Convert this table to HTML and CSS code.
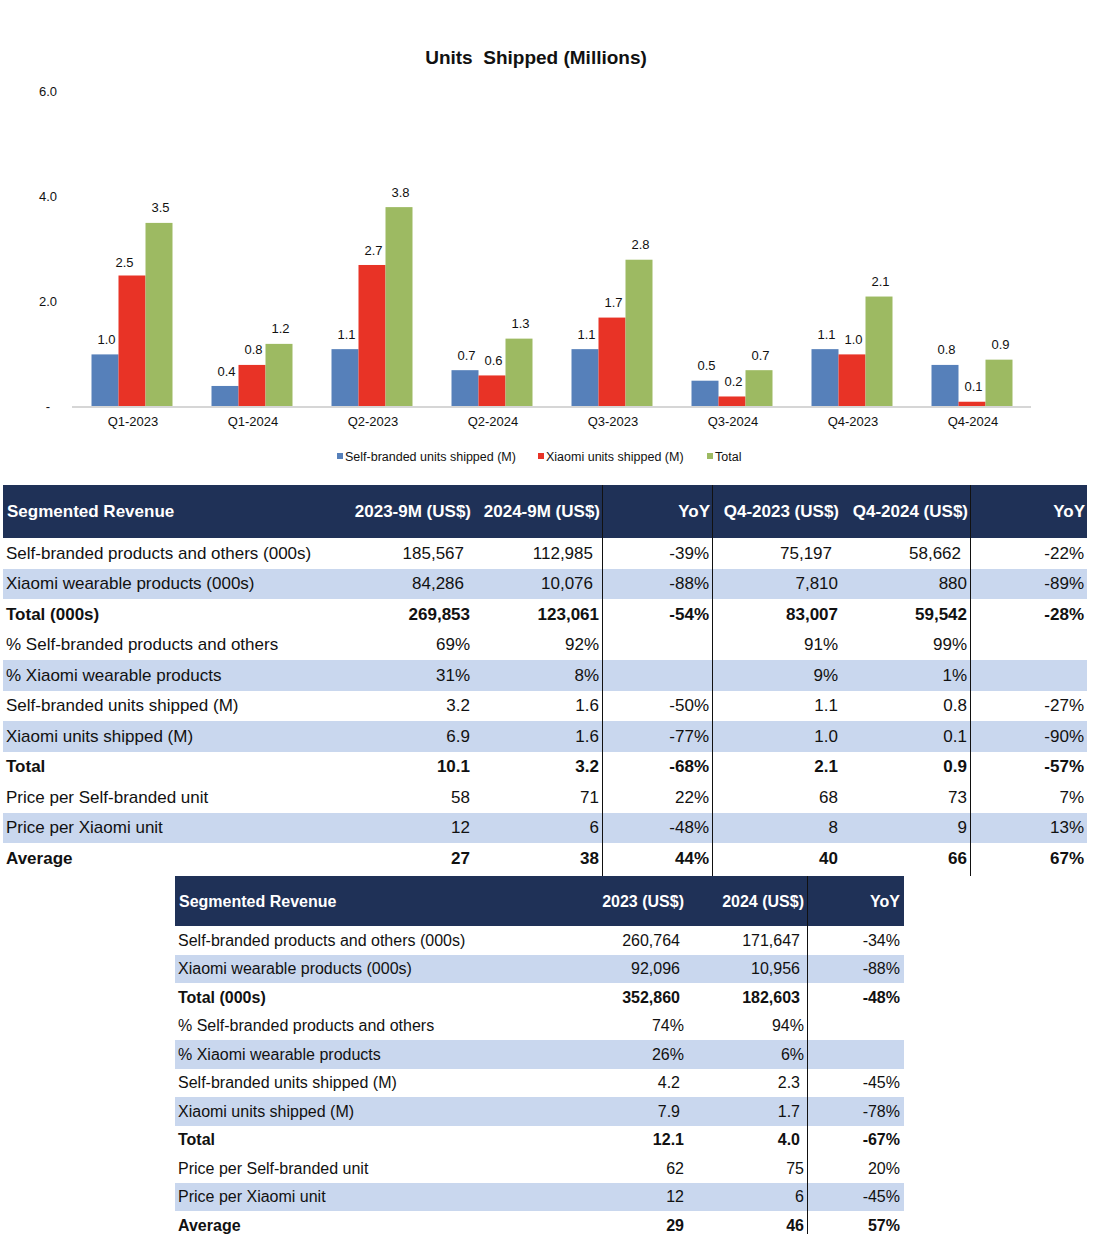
FILE: index.html
```html
<!DOCTYPE html>
<html>
<head>
<meta charset="utf-8">
<title>Units Shipped</title>
<link rel="stylesheet" href="styles.css">
</head>
<body>
<div class="chart">
<svg width="1110" height="485" viewBox="0 0 1110 485" xmlns="http://www.w3.org/2000/svg">
  <text class="title" x="536" y="63.5" text-anchor="middle">Units&#160; Shipped (Millions)</text>
  <g class="ylab" text-anchor="end">
    <text x="57" y="96">6.0</text>
    <text x="57" y="201.2">4.0</text>
    <text x="57" y="306.4">2.0</text>
    <text x="50" y="411">-</text>
  </g>
  <g class="bars">
    <rect class="b" x="91.5" y="354.4" width="27" height="52.6"/>
    <rect class="r" x="118.5" y="275.5" width="27" height="131.5"/>
    <rect class="g" x="145.5" y="222.9" width="27" height="184.1"/>

    <rect class="b" x="211.5" y="385.96" width="27" height="21.04"/>
    <rect class="r" x="238.5" y="364.92" width="27" height="42.08"/>
    <rect class="g" x="265.5" y="343.88" width="27" height="63.12"/>

    <rect class="b" x="331.5" y="349.14" width="27" height="57.86"/>
    <rect class="r" x="358.5" y="264.98" width="27" height="142.02"/>
    <rect class="g" x="385.5" y="207.12" width="27" height="199.88"/>

    <rect class="b" x="451.5" y="370.18" width="27" height="36.82"/>
    <rect class="r" x="478.5" y="375.44" width="27" height="31.56"/>
    <rect class="g" x="505.5" y="338.62" width="27" height="68.38"/>

    <rect class="b" x="571.5" y="349.14" width="27" height="57.86"/>
    <rect class="r" x="598.5" y="317.58" width="27" height="89.42"/>
    <rect class="g" x="625.5" y="259.72" width="27" height="147.28"/>

    <rect class="b" x="691.5" y="380.7" width="27" height="26.3"/>
    <rect class="r" x="718.5" y="396.48" width="27" height="10.52"/>
    <rect class="g" x="745.5" y="370.18" width="27" height="36.82"/>

    <rect class="b" x="811.5" y="349.14" width="27" height="57.86"/>
    <rect class="r" x="838.5" y="354.4" width="27" height="52.6"/>
    <rect class="g" x="865.5" y="296.54" width="27" height="110.46"/>

    <rect class="b" x="931.5" y="364.92" width="27" height="42.08"/>
    <rect class="r" x="958.5" y="401.74" width="27" height="5.26"/>
    <rect class="g" x="985.5" y="359.66" width="27" height="47.34"/>
  </g>
  <line class="axis" x1="72" y1="407" x2="1031" y2="407"/>
  <g class="vlab" text-anchor="middle">
    <text x="106.5" y="343.9">1.0</text>
    <text x="124.5" y="267">2.5</text>
    <text x="160.5" y="212.4">3.5</text>

    <text x="226.5" y="375.5">0.4</text>
    <text x="253.5" y="354.4">0.8</text>
    <text x="280.5" y="333.4">1.2</text>

    <text x="346.5" y="338.6">1.1</text>
    <text x="373.5" y="254.5">2.7</text>
    <text x="400.5" y="196.6">3.8</text>

    <text x="466.5" y="359.7">0.7</text>
    <text x="493.5" y="364.9">0.6</text>
    <text x="520.5" y="328.1">1.3</text>

    <text x="586.5" y="338.6">1.1</text>
    <text x="613.5" y="307.1">1.7</text>
    <text x="640.5" y="249.2">2.8</text>

    <text x="706.5" y="370.2">0.5</text>
    <text x="733.5" y="386">0.2</text>
    <text x="760.5" y="359.7">0.7</text>

    <text x="826.5" y="338.6">1.1</text>
    <text x="853.5" y="343.9">1.0</text>
    <text x="880.5" y="286">2.1</text>

    <text x="946.5" y="354.4">0.8</text>
    <text x="973.5" y="391.2">0.1</text>
    <text x="1000.5" y="349.2">0.9</text>
  </g>
  <g class="xlab" text-anchor="middle">
    <text x="133" y="426">Q1-2023</text>
    <text x="253" y="426">Q1-2024</text>
    <text x="373" y="426">Q2-2023</text>
    <text x="493" y="426">Q2-2024</text>
    <text x="613" y="426">Q3-2023</text>
    <text x="733" y="426">Q3-2024</text>
    <text x="853" y="426">Q4-2023</text>
    <text x="973" y="426">Q4-2024</text>
  </g>
  <g class="legend">
    <rect class="b" x="337" y="453" width="6" height="6"/>
    <text x="345" y="460.5">Self-branded units shipped (M)</text>
    <rect class="r" x="538" y="453" width="6" height="6"/>
    <text x="546" y="460.5">Xiaomi units shipped (M)</text>
    <rect class="g" x="707" y="453" width="6" height="6"/>
    <text x="715" y="460.5">Total</text>
  </g>
</svg>
</div>

<div class="t1">
  <div class="row head">
    <div class="lab">Segmented Revenue</div>
    <div>2023-9M (US$)</div>
    <div>2024-9M (US$)</div>
    <div class="bl">YoY</div>
    <div class="bl">Q4-2023 (US$)</div>
    <div>Q4-2024 (US$)</div>
    <div class="bl">YoY</div>
  </div>
  <div class="row">
    <div class="lab">Self-branded products and others (000s)</div>
    <div class="c">185,567</div><div class="c">112,985</div><div class="bl">-39%</div>
    <div class="bl c">75,197</div><div class="c">58,662</div><div class="bl">-22%</div>
  </div>
  <div class="row alt">
    <div class="lab">Xiaomi wearable products (000s)</div>
    <div class="c">84,286</div><div class="c">10,076</div><div class="bl">-88%</div>
    <div class="bl">7,810</div><div>880</div><div class="bl">-89%</div>
  </div>
  <div class="row bold">
    <div class="lab">Total (000s)</div>
    <div>269,853</div><div>123,061</div><div class="bl">-54%</div>
    <div class="bl">83,007</div><div>59,542</div><div class="bl">-28%</div>
  </div>
  <div class="row">
    <div class="lab">% Self-branded products and others</div>
    <div>69%</div><div>92%</div><div class="bl"></div>
    <div class="bl">91%</div><div>99%</div><div class="bl"></div>
  </div>
  <div class="row alt">
    <div class="lab">% Xiaomi wearable products</div>
    <div>31%</div><div>8%</div><div class="bl"></div>
    <div class="bl">9%</div><div>1%</div><div class="bl"></div>
  </div>
  <div class="row">
    <div class="lab">Self-branded units shipped (M)</div>
    <div>3.2</div><div>1.6</div><div class="bl">-50%</div>
    <div class="bl">1.1</div><div>0.8</div><div class="bl">-27%</div>
  </div>
  <div class="row alt">
    <div class="lab">Xiaomi units shipped (M)</div>
    <div>6.9</div><div>1.6</div><div class="bl">-77%</div>
    <div class="bl">1.0</div><div>0.1</div><div class="bl">-90%</div>
  </div>
  <div class="row bold">
    <div class="lab">Total</div>
    <div>10.1</div><div>3.2</div><div class="bl">-68%</div>
    <div class="bl">2.1</div><div>0.9</div><div class="bl">-57%</div>
  </div>
  <div class="row">
    <div class="lab">Price per Self-branded unit</div>
    <div>58</div><div>71</div><div class="bl">22%</div>
    <div class="bl">68</div><div>73</div><div class="bl">7%</div>
  </div>
  <div class="row alt">
    <div class="lab">Price per Xiaomi unit</div>
    <div>12</div><div>6</div><div class="bl">-48%</div>
    <div class="bl">8</div><div>9</div><div class="bl">13%</div>
  </div>
  <div class="row bold last">
    <div class="lab">Average</div>
    <div>27</div><div>38</div><div class="bl">44%</div>
    <div class="bl">40</div><div>66</div><div class="bl">67%</div>
  </div>
</div>

<div class="t2">
  <div class="row head">
    <div class="lab">Segmented Revenue</div>
    <div>2023 (US$)</div>
    <div>2024 (US$)</div>
    <div class="bl">YoY</div>
  </div>
  <div class="row">
    <div class="lab">Self-branded products and others (000s)</div>
    <div class="c">260,764</div><div class="c">171,647</div><div class="bl">-34%</div>
  </div>
  <div class="row alt">
    <div class="lab">Xiaomi wearable products (000s)</div>
    <div class="c">92,096</div><div class="c">10,956</div><div class="bl">-88%</div>
  </div>
  <div class="row bold">
    <div class="lab">Total (000s)</div>
    <div class="c">352,860</div><div class="c">182,603</div><div class="bl">-48%</div>
  </div>
  <div class="row">
    <div class="lab">% Self-branded products and others</div>
    <div>74%</div><div>94%</div><div class="bl"></div>
  </div>
  <div class="row alt">
    <div class="lab">% Xiaomi wearable products</div>
    <div>26%</div><div>6%</div><div class="bl"></div>
  </div>
  <div class="row">
    <div class="lab">Self-branded units shipped (M)</div>
    <div class="c">4.2</div><div class="c">2.3</div><div class="bl">-45%</div>
  </div>
  <div class="row alt">
    <div class="lab">Xiaomi units shipped (M)</div>
    <div class="c">7.9</div><div class="c">1.7</div><div class="bl">-78%</div>
  </div>
  <div class="row bold">
    <div class="lab">Total</div>
    <div>12.1</div><div class="c">4.0</div><div class="bl">-67%</div>
  </div>
  <div class="row">
    <div class="lab">Price per Self-branded unit</div>
    <div>62</div><div>75</div><div class="bl">20%</div>
  </div>
  <div class="row alt">
    <div class="lab">Price per Xiaomi unit</div>
    <div>12</div><div>6</div><div class="bl">-45%</div>
  </div>
  <div class="row bold">
    <div class="lab">Average</div>
    <div>29</div><div>46</div><div class="bl">57%</div>
  </div>
</div>
</body>
</html>
```
FILE: styles.css
```css
html, body {
  margin: 0;
  padding: 0;
  background: #ffffff;
}
body {
  width: 1110px;
  font-family: "Liberation Sans", Arial, sans-serif;
  color: #111111;
  overflow: hidden;
}
.chart svg {
  display: block;
  font-family: "Liberation Sans", Arial, sans-serif;
}
.title {
  font-size: 19px;
  font-weight: bold;
  fill: #111111;
}
.ylab text, .xlab text, .vlab text {
  font-size: 13px;
  fill: #111111;
}
.legend text {
  font-size: 12.5px;
  fill: #111111;
}
.b { fill: #5680ba; }
.r { fill: #e83326; }
.g { fill: #9dba62; }
.axis {
  stroke: #d6d6d6;
  stroke-width: 2;
}

/* tables */
.t1, .t2 {
  display: flex;
  flex-direction: column;
}
.t1 {
  margin-left: 3px;
  width: 1084px;
  font-size: 17px;
}
.t2 {
  margin-left: 175px;
  width: 729px;
  font-size: 16px;
}
.row {
  display: grid;
  align-items: stretch;
}
.t1 .row {
  grid-template-columns: 342px 128px 129px 110px 129px 129px 117px;
  height: 30.5px;
}
.t2 .row {
  grid-template-columns: 390px 122px 120px 97px;
  height: 28.5px;
}
.row > div {
  box-sizing: border-box;
  display: flex;
  align-items: center;
  justify-content: flex-end;
  padding-right: 3px;
  padding-top: 1px;
  white-space: nowrap;
}
.row > div.lab {
  justify-content: flex-start;
  padding-left: 3px;
}
.t1 .row > div.c { padding-right: 9px; }
.t2 .row > div.c { padding-right: 7px; }
.t2 .row > div.bl { padding-right: 4px; }
.row > div.bl {
  border-left: 1px solid #111111;
}
.row.alt { background: #c9d7ee; }
.row.bold { font-weight: bold; }
.row.head {
  background: #1f3157;
  color: #ffffff;
  font-weight: bold;
}
.t1 .row.head { height: 53px; }
.t2 .row.head { height: 50px; }
.row.head > div { padding-right: 2px; }
.row.head > div.lab { padding-left: 4px; }
.t2 .row.head > div { padding-right: 3px; }
.t2 .row.head > div.bl { padding-right: 4px; }
.t1 .row.last { height: 33px; }
.t1 .row.last > div { padding-bottom: 2.5px; }
```
